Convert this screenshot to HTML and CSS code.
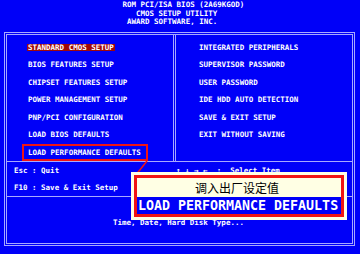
FILE: index.html
```html
<!DOCTYPE html>
<html lang="zh-CN">
<head>
    <meta charset="UTF-8">
    <meta name="viewport" content="width=device-width, initial-scale=1.0">
    <title>CMOS Setup Utility</title>
    <link rel="stylesheet" href="styles.css">
</head>
<body>

<div class="screen">
    <pre class="header">                           ROM PCI/ISA BIOS (2A69KGOD)
                              CMOS SETUP UTILITY
                            AWARD SOFTWARE, INC.</pre>

    <div class="frame">
        <div class="menu">
            <div class="column left">
                <div class="item active"><span>STANDARD CMOS SETUP</span></div>
                <div class="item"><span>BIOS FEATURES SETUP</span></div>
                <div class="item"><span>CHIPSET FEATURES SETUP</span></div>
                <div class="item"><span>POWER MANAGEMENT SETUP</span></div>
                <div class="item"><span>PNP/PCI CONFIGURATION</span></div>
                <div class="item"><span>LOAD BIOS DEFAULTS</span></div>
                <div class="item marked"><span>LOAD PERFORMANCE DEFAULTS</span></div>
            </div>
            <div class="column right">
                <div class="item"><span>INTEGRATED PERIPHERALS</span></div>
                <div class="item"><span>SUPERVISOR PASSWORD</span></div>
                <div class="item"><span>USER PASSWORD</span></div>
                <div class="item"><span>IDE HDD AUTO DETECTION</span></div>
                <div class="item"><span>SAVE &amp; EXIT SETUP</span></div>
                <div class="item"><span>EXIT WITHOUT SAVING</span></div>
            </div>
        </div>

        <div class="keys">
            <div class="keys-left">
                <div class="key">Esc : Quit</div>
                <div class="key">F10 : Save &amp; Exit Setup</div>
            </div>
            <div class="keys-right">
                <div class="key">↑ ↓ → ←  :  Select Item</div>
            </div>
        </div>

        <div class="info">Time, Date, Hard Disk Type...</div>
    </div>

    <!-- pointer from the marked item to the note -->
    <svg class="leader" width="360" height="254" viewBox="0 0 360 254">
        <line x1="147" y1="161" x2="135" y2="176" stroke="#f01414" stroke-width="1.5"/>
    </svg>

    <div class="callout">
        <div class="callout-inner">
            <div class="callout-title">调入出厂设定值</div>
            <div class="callout-bar">LOAD PERFORMANCE DEFAULTS</div>
        </div>
    </div>
</div>

</body>
</html>
```

FILE: styles.css
```css
body {
    margin: 0;
    background: #0000f8;
}

.screen {
    position: relative;
    width: 360px;
    height: 254px;
    overflow: hidden;
    color: #fff;
    font-family: "DejaVu Sans Mono", "Liberation Mono", monospace;
    font-size: 7.5px;
    font-weight: bold;
}

.header {
    margin: 0;
    height: 32px;
    box-sizing: border-box;
    padding: 1.3px 0 0 0.5px;
    font: inherit;
    line-height: 8.4px;
}

/* outer double frame */
.frame {
    margin-left: 4px;
    width: 351px;
    height: 214px;
    box-sizing: border-box;
    border: 3px double #a8a8ff;
}

.menu {
    display: grid;
    grid-template-columns: 169px 1fr;
    height: 126px;
    border-bottom: 1px solid #a8a8ff;
}

.column {
    padding-top: 3.4px;
}

.column.left {
    padding-left: 20px;
    border-right: 3px double #a8a8ff;
}

.column.right {
    padding-left: 22px;
}

.item {
    height: 17.55px;
    display: flex;
    align-items: center;
}

.item span {
    line-height: 7px;
    padding: 0 1px;
    white-space: pre;
}

.item.active span {
    background: #a00808;
}

.item.marked span {
    margin-left: -5px;
    padding: 3px 5.5px 3px 4px;
    border: 2px solid #f01414;
}

.keys {
    display: grid;
    grid-template-columns: 169px 1fr;
    height: 34px;
    line-height: 17px;
    border-bottom: 1px solid #a8a8ff;
}

.key {
    white-space: pre;
}

.keys-left {
    padding-left: 7px;
}

.info {
    padding: 17px 0 0 106px;
    line-height: 17px;
}

.leader {
    position: absolute;
    left: 0;
    top: 0;
    pointer-events: none;
}

/* note box over the screen */
.callout {
    position: absolute;
    left: 131px;
    top: 172px;
    width: 216px;
    box-sizing: border-box;
    padding: 3px;
    background: #ffffe4;
}

.callout-inner {
    border: 3px solid #f01414;
}

.callout-title {
    height: 19px;
    line-height: 19px;
    padding-right: 4px;
    text-align: center;
    color: #000;
    font-family: "Noto Sans CJK SC", sans-serif;
    font-size: 12px;
    font-weight: normal;
}

.callout-bar {
    height: 17px;
    line-height: 17px;
    padding-left: 1px;
    background: #0000f8;
    color: #fff;
    font-size: 13.3px;
    font-weight: bold;
    white-space: pre;
}
```
